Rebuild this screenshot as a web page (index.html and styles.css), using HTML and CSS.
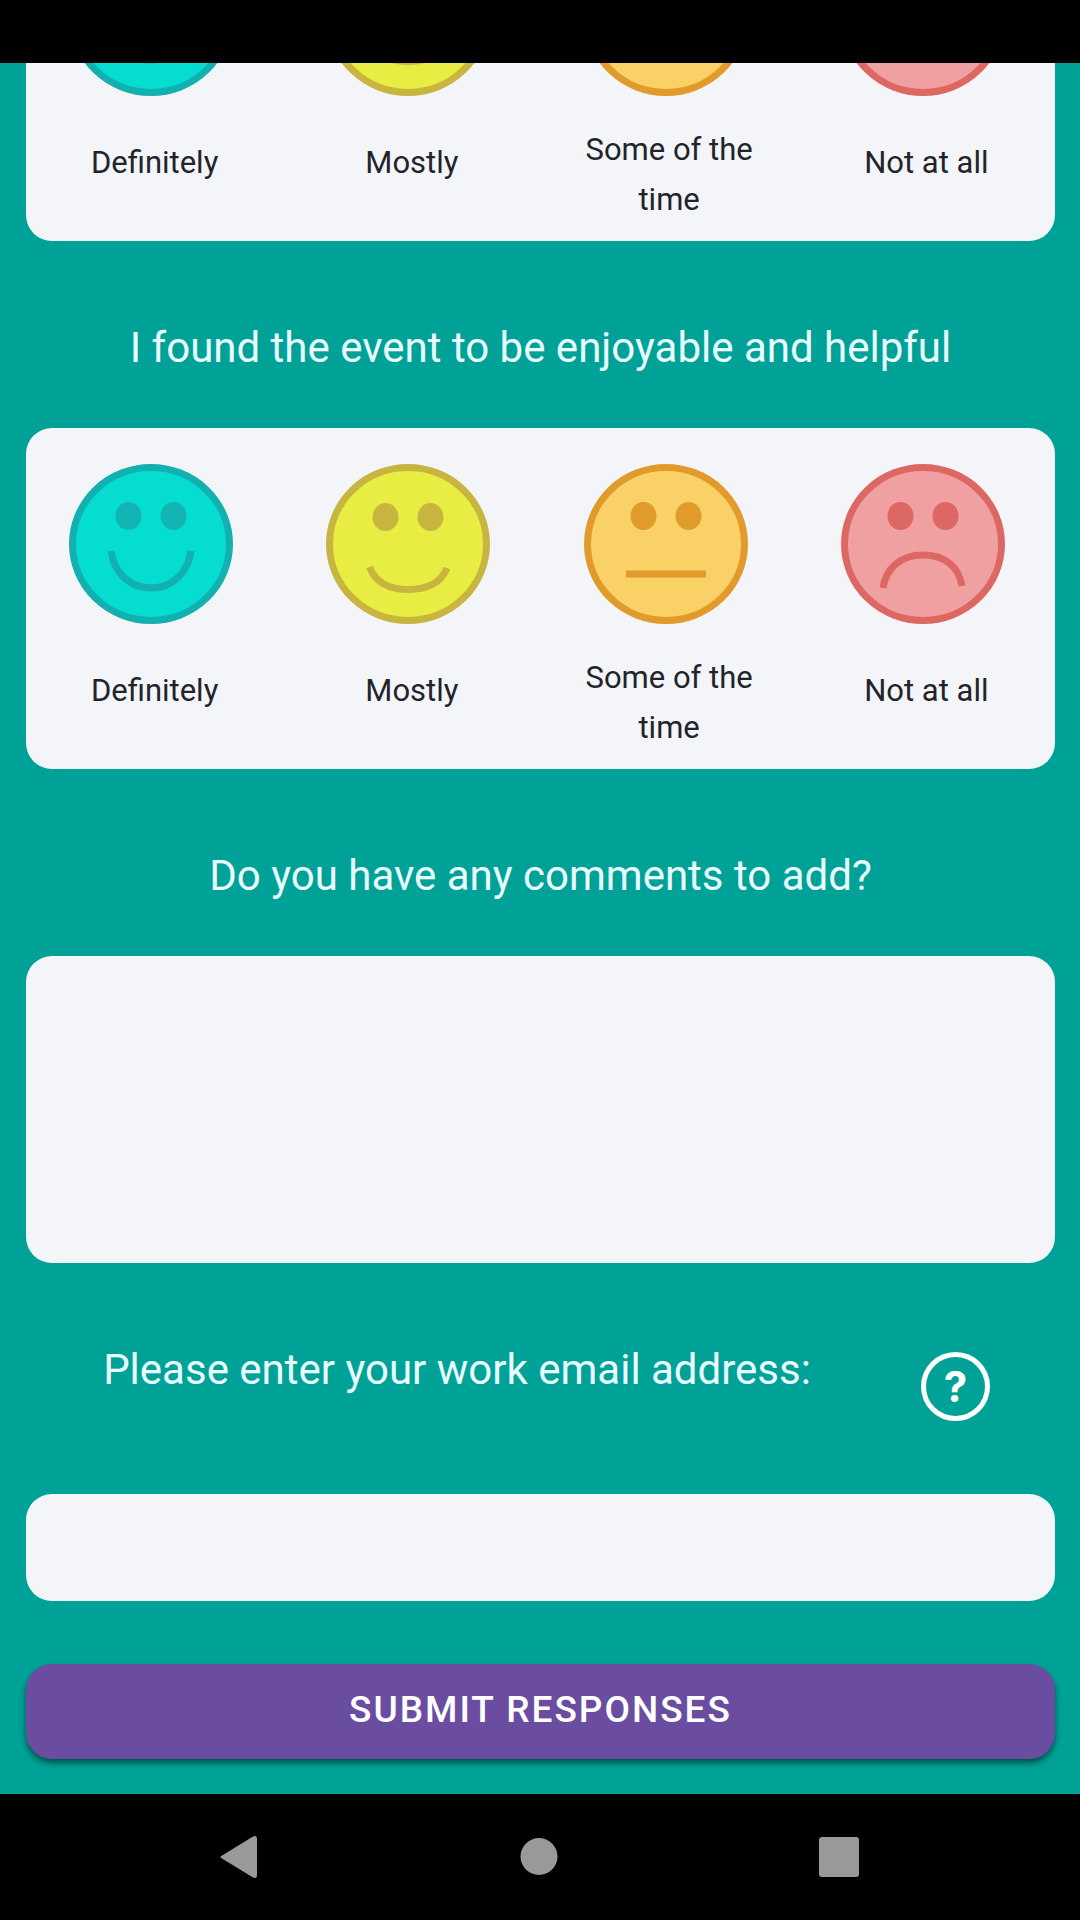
FILE: index.html
```html
<!DOCTYPE html>
<html lang="en">
<head>
<meta charset="utf-8">
<meta name="viewport" content="width=device-width, initial-scale=1">
<title>Event feedback</title>
<link rel="stylesheet" href="styles.css">
</head>
<body>
<svg class="sprite" aria-hidden="true">
  <symbol id="face-great" viewBox="0 0 164 160">
    <ellipse cx="82" cy="80" rx="78.500" ry="76.500"/>
    <ellipse class="eye" cx="59.500" cy="52" rx="13" ry="14"/>
    <ellipse class="eye" cx="104.500" cy="52" rx="13" ry="14"/>
    <path d="M42 87C45 108 60 124 82 124S119 108 122 87"/>
  </symbol>
  <symbol id="face-good" viewBox="0 0 164 160">
    <ellipse cx="82" cy="80" rx="78.500" ry="76.500"/>
    <ellipse class="eye" cx="59.500" cy="53" rx="13" ry="14"/>
    <ellipse class="eye" cx="104.500" cy="53" rx="13" ry="14"/>
    <path d="M43.500 103C49 118 63 125.500 82 125.500S115 119 121 104"/>
  </symbol>
  <symbol id="face-neutral" viewBox="0 0 164 160">
    <ellipse cx="82" cy="80" rx="78.500" ry="76.500"/>
    <ellipse class="eye" cx="59.500" cy="52" rx="13" ry="14"/>
    <ellipse class="eye" cx="104.500" cy="52" rx="13" ry="14"/>
    <path d="M42 110H122"/>
  </symbol>
  <symbol id="face-sad" viewBox="0 0 164 160">
    <ellipse cx="82" cy="80" rx="78.500" ry="76.500"/>
    <ellipse class="eye" cx="59.500" cy="52" rx="13" ry="14"/>
    <ellipse class="eye" cx="104.500" cy="52" rx="13" ry="14"/>
    <path d="M42 124C45 104 60 91 82 91S118 103 121 122"/>
  </symbol>
</svg>

<div class="status-bar"></div>

<main class="screen">
  <form class="survey">
    <div class="previous">
      <fieldset class="card options" aria-label="Previous question">
        <label class="option">
          <input class="option-input" type="radio" name="previous" value="definitely">
          <svg class="face great" viewBox="0 0 164 160"><use href="#face-great"/></svg>
          <span class="option-label">Definitely</span>
        </label>
        <label class="option">
          <input class="option-input" type="radio" name="previous" value="mostly">
          <svg class="face good" viewBox="0 0 164 160"><use href="#face-good"/></svg>
          <span class="option-label">Mostly</span>
        </label>
        <label class="option">
          <input class="option-input" type="radio" name="previous" value="sometimes">
          <svg class="face neutral" viewBox="0 0 164 160"><use href="#face-neutral"/></svg>
          <span class="option-label wrapped">Some of the time</span>
        </label>
        <label class="option">
          <input class="option-input" type="radio" name="previous" value="never">
          <svg class="face sad" viewBox="0 0 164 160"><use href="#face-sad"/></svg>
          <span class="option-label">Not at all</span>
        </label>
      </fieldset>
    </div>

    <h2 class="question" id="enjoyable">I found the event to be enjoyable and helpful</h2>
    <fieldset class="card options" aria-labelledby="enjoyable">
      <label class="option">
        <input class="option-input" type="radio" name="enjoyable" value="definitely">
        <svg class="face great" viewBox="0 0 164 160"><use href="#face-great"/></svg>
        <span class="option-label">Definitely</span>
      </label>
      <label class="option">
        <input class="option-input" type="radio" name="enjoyable" value="mostly">
        <svg class="face good" viewBox="0 0 164 160"><use href="#face-good"/></svg>
        <span class="option-label">Mostly</span>
      </label>
      <label class="option">
        <input class="option-input" type="radio" name="enjoyable" value="sometimes">
        <svg class="face neutral" viewBox="0 0 164 160"><use href="#face-neutral"/></svg>
        <span class="option-label wrapped">Some of the time</span>
      </label>
      <label class="option">
        <input class="option-input" type="radio" name="enjoyable" value="never">
        <svg class="face sad" viewBox="0 0 164 160"><use href="#face-sad"/></svg>
        <span class="option-label">Not at all</span>
      </label>
    </fieldset>

    <label class="question" for="comments">Do you have any comments to add?</label>
    <textarea class="card comments" id="comments" name="comments"></textarea>

    <div class="email-row">
      <label class="question email-label" for="email">Please enter your work email address:</label>
      <button class="help" type="button" aria-label="Help">?</button>
    </div>
    <input class="card email" id="email" name="email" type="email">

    <button class="submit" type="submit">SUBMIT RESPONSES</button>
  </form>
</main>

<nav class="nav-bar" aria-label="System">
  <button class="nav-button" type="button" aria-label="Back">
    <svg width="44" height="44" viewBox="0 0 44 44"><path d="M5 20.500L36 1.500Q40 0 40 4V40Q40 44 36 42.500L5 23.500Q2 22 5 20.500Z"/></svg>
  </button>
  <button class="nav-button" type="button" aria-label="Home">
    <svg width="44" height="44" viewBox="0 0 44 44"><circle cx="22" cy="21.500" r="18.500"/></svg>
  </button>
  <button class="nav-button" type="button" aria-label="Recent apps">
    <svg width="44" height="44" viewBox="0 0 44 44"><rect x="2" y="2" width="40" height="40" rx="3"/></svg>
  </button>
</nav>
</body>
</html>
```
FILE: styles.css
```css
* {
  box-sizing: border-box;
}

body {
  margin: 0;
  min-height: 100vh;
  display: flex;
  flex-direction: column;
  background: #00a297;
  font-family: Roboto, "Liberation Sans", sans-serif;
  color: #222429;
}

.sprite {
  display: none;
}

.status-bar {
  height: 63px;
  background: #000;
}

.screen {
  flex: 1;
}

.survey {
  display: flex;
  flex-direction: column;
  padding: 0 25px 35px 26px;
}

/* Scrolled partly out of view: only the lower end of the card shows. */
.previous {
  height: 178px;
  display: flex;
  flex-direction: column;
  justify-content: flex-end;
  overflow: hidden;
}

.card {
  width: 100%;
  margin: 0;
  border: 0;
  border-radius: 26px;
  background: #f3f5f9;
  font: inherit;
  font-size: 31px;
  color: inherit;
}

.options {
  flex: none;
  display: grid;
  grid-template-columns: repeat(4, 1fr);
  padding: 36px 0 16px;
}

.option {
  position: relative;
  display: flex;
  flex-direction: column;
}

.option-input {
  position: absolute;
  opacity: 0;
}

.face {
  width: 164px;
  height: 160px;
  margin: 0 auto 29px 43px;
  stroke-width: 7px;
}

.face.great {
  fill: #04ddd0;
  stroke: #12b0b0;
  --ink: #12b4b4;
}

.face.good {
  fill: #e7ed43;
  stroke: #c8b53f;
  --ink: #c8b53f;
}

.face.neutral {
  fill: #fad166;
  stroke: #e09b2b;
  --ink: #e09b2b;
}

.face.sad {
  fill: #f1a0a1;
  stroke: #dd6762;
  --ink: #dd6762;
}

.eye {
  fill: var(--ink);
  stroke: none;
}

.sprite path {
  fill: none;
}

.option-label {
  flex: 1;
  display: flex;
  align-items: center;
  justify-content: center;
  padding: 0 36px 24px;
  font-size: 31px;
  line-height: 50px;
  text-align: center;
}

.option-label.wrapped {
  padding-bottom: 0;
}

.question {
  margin: 0;
  padding: 73px 0 46px;
  font-size: 42px;
  font-weight: 400;
  line-height: 68px;
  text-align: center;
  color: #e9fcff;
}

.comments {
  display: block;
  height: 307px;
  padding: 24px;
  resize: none;
}

.email-row {
  display: flex;
  align-items: flex-start;
  padding-bottom: 44px;
}

.email-label {
  flex: 1;
  padding-left: 36px;
}

.help {
  flex: none;
  width: 69px;
  height: 69px;
  margin: 89px 65px 0 69px;
  padding: 0;
  border: 5px solid #fff;
  border-radius: 50%;
  background: none;
  font: 700 42px/1 Inter, sans-serif;
  color: #fff;
}

.email {
  height: 107px;
  padding: 0 24px;
}

.submit {
  height: 95px;
  margin-top: 63px;
  padding-bottom: 4px;
  border: 0;
  border-radius: 26px;
  background: #6a4da1;
  box-shadow: 0 4px 6px rgba(0, 0, 0, 0.5);
  font: 500 37px/48px Roboto, sans-serif;
  letter-spacing: 2px;
  color: #fff;
}

.nav-bar {
  height: 126px;
  display: flex;
  align-items: center;
  justify-content: center;
  gap: 256px;
  padding-right: 2px;
  background: #000;
}

.nav-button {
  display: flex;
  padding: 0;
  border: 0;
  background: none;
  fill: #999;
}
```
